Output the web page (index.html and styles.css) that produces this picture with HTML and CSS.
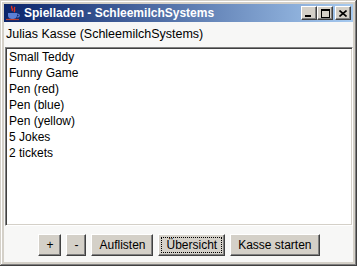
FILE: index.html
```html
<!DOCTYPE html>
<html lang="de">
<head>
    <meta charset="UTF-8">
    <title>Spielladen - SchleemilchSystems</title>
    <link rel="stylesheet" href="styles.css">
</head>
<body>
    <div class="window">
        <div class="titlebar">
            <svg class="app-icon" width="16" height="16" viewBox="0 0 16 16">
                <path d="M7 1 C5 3 9 4 7 6 M10 2 C8 4 11 5 9 7" stroke="#e0301e" stroke-width="1.4" fill="none"/>
                <path d="M3 8 H12 V10 C12 13 10 14 7.5 14 C5 14 3 13 3 10 Z" fill="#5b7fd6"/>
                <path d="M12 9 C15 9 15 12 12 12" stroke="#5b7fd6" stroke-width="1.2" fill="none"/>
                <path d="M1 14.5 H14" stroke="#c04030" stroke-width="1.2"/>
            </svg>
            <span class="title">Spielladen - SchleemilchSystems</span>
            <div class="controls">
                <span class="ctl">
                    <svg width="8" height="7" viewBox="0 0 8 7"><rect x="0" y="5" width="6" height="2" fill="#000"/></svg>
                </span>
                <span class="ctl">
                    <svg width="9" height="9" viewBox="0 0 9 9"><rect x="0.5" y="0.5" width="8" height="8" fill="none" stroke="#000"/><rect x="0" y="0" width="9" height="2" fill="#000"/></svg>
                </span>
                <span class="ctl ctl-close">
                    <svg width="8" height="7" viewBox="0 0 8 7"><path d="M0.5 0.5 L7.5 6.5 M7.5 0.5 L0.5 6.5" stroke="#000" stroke-width="1.6"/></svg>
                </span>
            </div>
        </div>

        <div class="content">
            <div class="caption">Julias Kasse (SchleemilchSystems)</div>
            <ul class="items">
                <li>Small Teddy</li>
                <li>Funny Game</li>
                <li>Pen (red)</li>
                <li>Pen (blue)</li>
                <li>Pen (yellow)</li>
                <li>5 Jokes</li>
                <li>2 tickets</li>
            </ul>
            <div class="actions">
                <button type="button" class="btn">+</button>
                <button type="button" class="btn">-</button>
                <button type="button" class="btn">Auflisten</button>
                <button type="button" class="btn focused">Übersicht</button>
                <button type="button" class="btn">Kasse starten</button>
            </div>
        </div>
    </div>
</body>
</html>
```

FILE: styles.css
```css
/* Fenster im Windows-2000-Stil */
body {
    margin: 0;
    font-family: 'Liberation Sans', Arial, sans-serif;
    font-size: 12px;
    color: #000;
}

.window {
    width: 357px;
    height: 266px;
    box-sizing: border-box;
    padding: 4px;
    background: #d4d0c8;
    box-shadow: inset -1px -1px #404040, inset 1px 1px #d4d0c8,
                inset -2px -2px #808080, inset 2px 2px #fff;
    display: flex;
    flex-direction: column;
}

.titlebar {
    height: 18px;
    display: flex;
    align-items: center;
    padding: 0 2px 0 1px;
    background: linear-gradient(to right, #0a246a, #a6caf0);
    color: #fff;
}

.app-icon {
    flex: none;
    margin-right: 3px;
}

.title {
    flex: 1;
    font-weight: bold;
    font-size: 12px;
    white-space: nowrap;
}

.controls {
    display: flex;
}

.ctl {
    width: 16px;
    height: 14px;
    box-sizing: border-box;
    background: #d4d0c8;
    border: 1px solid;
    border-color: #fff #404040 #404040 #fff;
    box-shadow: inset -1px -1px #808080;
    display: flex;
    align-items: center;
    justify-content: center;
}

.ctl-close {
    margin-left: 2px;
}

.content {
    flex: 1;
    display: flex;
    flex-direction: column;
    background: #f7f7f6;
    padding: 0 0 0 1px;
}

.caption {
    height: 25px;
    line-height: 25px;
    padding-left: 1px;
    font-size: 12.5px;
}

.items {
    list-style: none;
    margin: 0;
    padding: 1px 2px;
    width: 348px;
    height: 179px;
    box-sizing: border-box;
    background: #fff;
    border: 1px solid;
    border-color: #808080 #fff #fff #808080;
    box-shadow: inset 1px 1px #404040, inset -1px -1px #d4d0c8;
}

.items li {
    line-height: 16px;
    padding-left: 1px;
}

.actions {
    display: flex;
    justify-content: center;
    gap: 5px;
    padding-top: 8px;
}

.btn {
    height: 22px;
    padding: 0 7px;
    font-family: inherit;
    font-size: 12px;
    color: #000;
    background: #d4d0c8;
    border: 1px solid;
    border-color: #fff #404040 #404040 #fff;
    box-shadow: inset -1px -1px #808080;
    border-radius: 0;
}

.focused {
    outline: 1px dotted #000;
    outline-offset: -4px;
}
```
